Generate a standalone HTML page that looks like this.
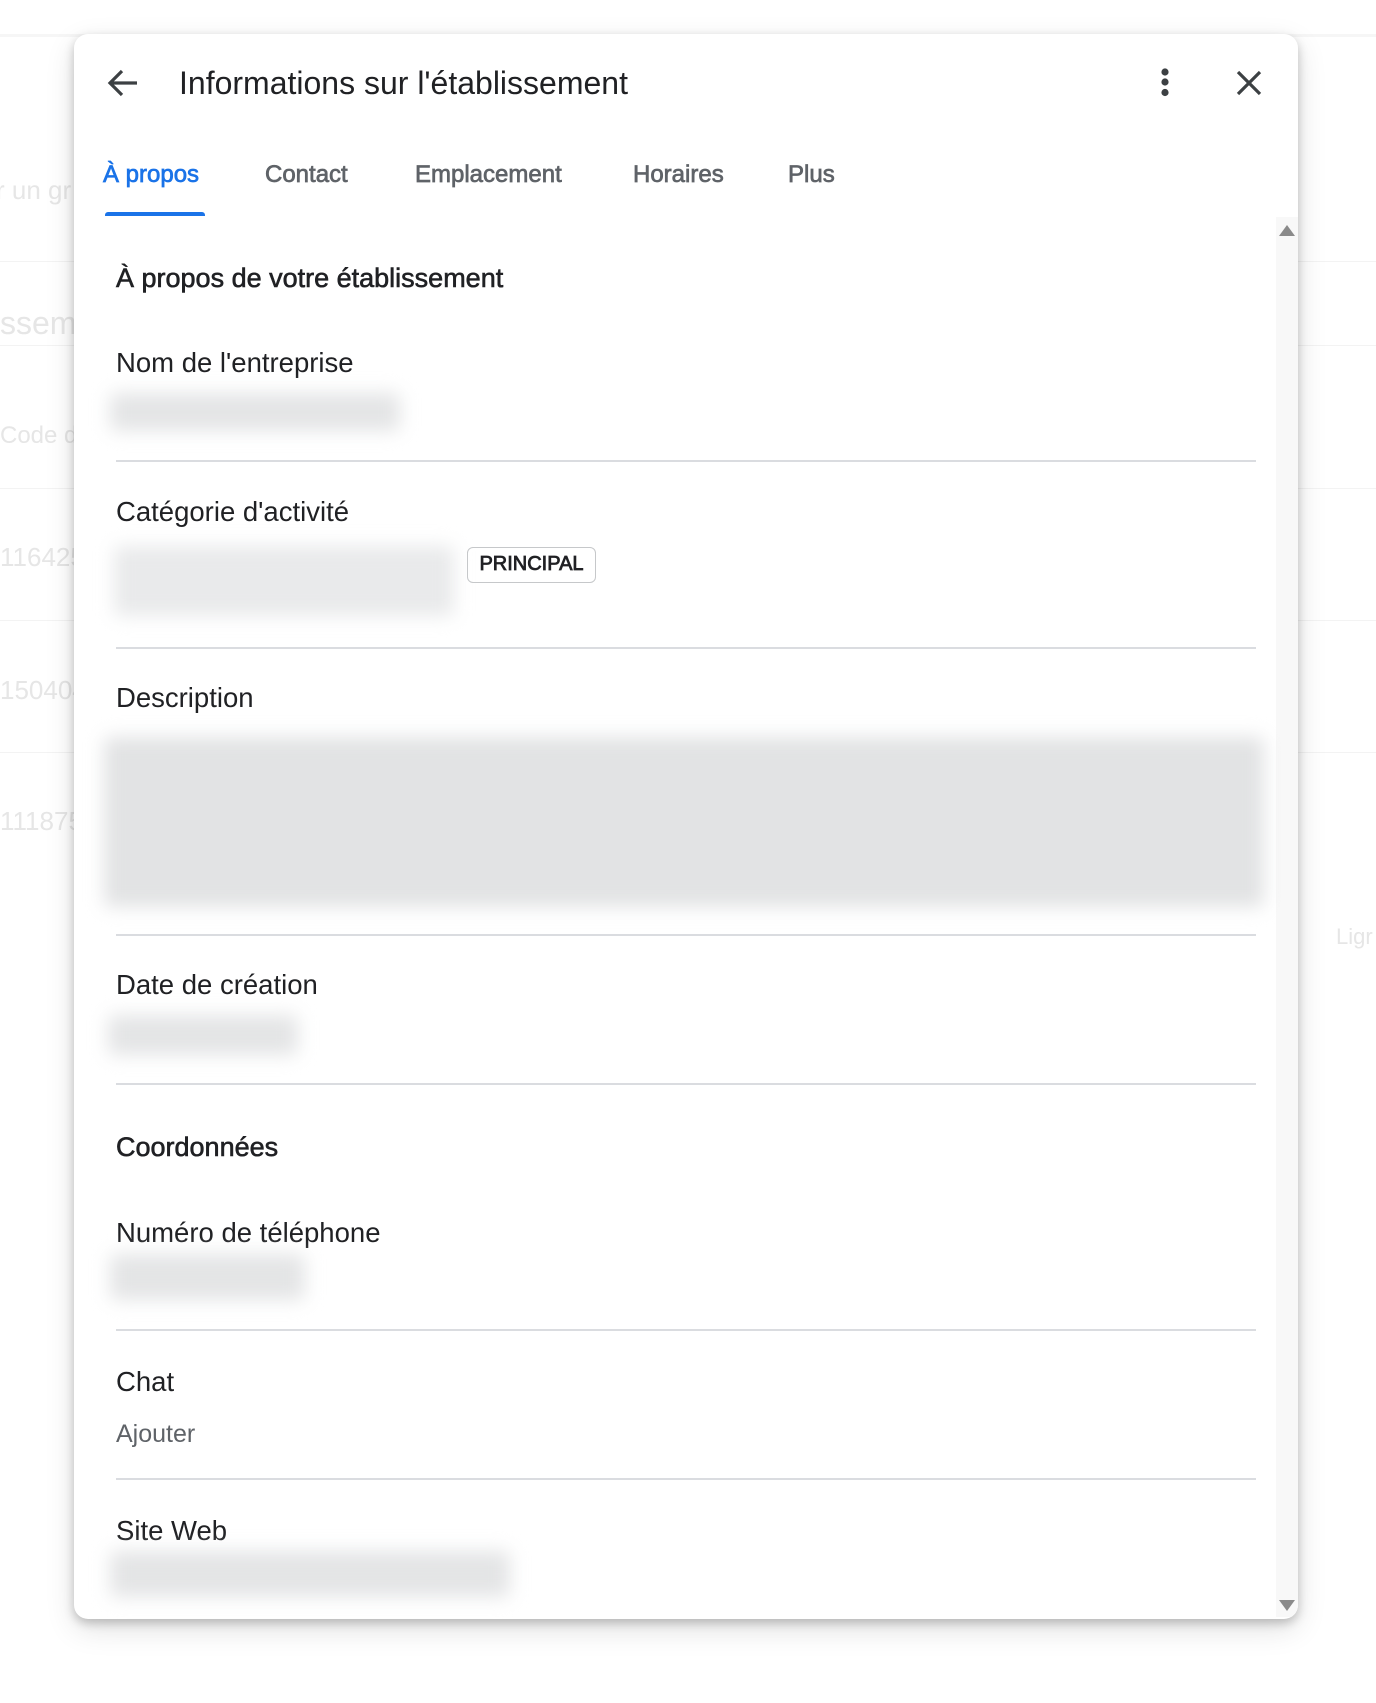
<!DOCTYPE html>
<html><head><meta charset="utf-8"><style>
*{margin:0;padding:0;box-sizing:border-box}
body{width:1376px;height:1703px;background:#fff;position:relative;overflow:hidden;font-family:"Liberation Sans",Arial,sans-serif;color:#3c4043}
.a{position:absolute;white-space:nowrap}
.bg{color:#e6e6e6;font-size:26px}
.hl{position:absolute;left:0;width:1376px;height:1px;background:#f3f3f3}
#dlg{position:absolute;left:74px;top:34px;width:1224px;height:1585px;background:#fff;border-radius:14px;box-shadow:0 4px 10px rgba(0,0,0,.22),0 10px 30px rgba(0,0,0,.12);overflow:hidden}
.lbl{font-size:27.5px;color:#202124}
.h{font-size:27px;color:#202124;-webkit-text-stroke:0.6px #202124}
.div{position:absolute;left:42px;width:1140px;height:2px;background:#dadce0}
.blur{position:absolute;background:#e4e5e6;filter:blur(9px);border-radius:6px}
.tab{font-size:24px;color:#5f6368;-webkit-text-stroke:0.7px #5f6368;top:127px}
</style></head><body>
<div class="hl" style="top:34px;height:3px;background:#f6f6f6"></div>
<div class="a bg" style="left:-4px;top:175px">r un gr</div>
<div class="a bg" style="left:0;top:305px;font-size:32px">ssem</div>
<div class="a bg" style="left:0;top:422px;font-size:24px">Code d</div>
<div class="a bg" style="left:0;top:542px">116425</div>
<div class="a bg" style="left:0;top:675px">150404</div>
<div class="a bg" style="left:0;top:806px">111875</div>
<div class="a bg" style="left:1336px;top:924px;font-size:22px">Ligr</div>
<div class="hl" style="top:261px"></div><div class="hl" style="top:345px"></div><div class="hl" style="top:488px"></div><div class="hl" style="top:620px"></div><div class="hl" style="top:752px"></div>

<div id="dlg">
<svg class="a" style="left:32px;top:34px" width="34" height="30" viewBox="0 0 34 30"><path d="M31 15H4M16 3L4 15l12 12" fill="none" stroke="#3c4043" stroke-width="3.2"/></svg>
<div class="a" style="left:105px;top:31px;font-size:32px;color:#202124">Informations sur l'établissement</div>
<svg class="a" style="left:1083px;top:34px" width="16" height="30"><circle cx="8" cy="4" r="3.6" fill="#3c4043"/><circle cx="8" cy="14" r="3.6" fill="#3c4043"/><circle cx="8" cy="24.5" r="3.6" fill="#3c4043"/></svg>
<svg class="a" style="left:1162px;top:36px" width="26" height="26"><path d="M2 2L24 24M24 2L2 24" stroke="#3c4043" stroke-width="3.2"/></svg>

<div class="a tab" style="left:29px;color:#1a73e8;-webkit-text-stroke:0.7px #1a73e8">À propos</div>
<div class="a tab" style="left:191px">Contact</div>
<div class="a tab" style="left:341px">Emplacement</div>
<div class="a tab" style="left:559px">Horaires</div>
<div class="a tab" style="left:714px">Plus</div>
<div class="a" style="left:31px;top:178px;width:100px;height:4px;background:#1a73e8;border-radius:3px 3px 0 0"></div>

<div class="a" style="left:1202px;top:183px;width:22px;height:1400px;background:#f8f8f8"></div>
<svg class="a" style="left:1204px;top:190px" width="18" height="14"><path d="M9 1L17 12H1Z" fill="#8a8a8a"/></svg>
<svg class="a" style="left:1204px;top:1564px" width="18" height="14"><path d="M9 13L17 2H1Z" fill="#8a8a8a"/></svg>

<div class="a h" style="left:42px;top:229px">À propos de votre établissement</div>
<div class="a lbl" style="left:42px;top:313px">Nom de l'entreprise</div>
<div class="blur" style="left:36px;top:359px;width:290px;height:38px"></div>
<div class="div" style="top:426px"></div>

<div class="a lbl" style="left:42px;top:462px">Catégorie d'activité</div>
<div class="blur" style="left:40px;top:512px;width:340px;height:70px;background:#e9eaeb"></div>
<div class="a" style="left:393px;top:513px;width:129px;height:36px;border:1.5px solid #c6c8ca;border-radius:6px;font-size:20px;color:#202124;-webkit-text-stroke:0.8px #202124;text-align:center;line-height:33px">PRINCIPAL</div>
<div class="div" style="top:613px"></div>

<div class="a lbl" style="left:42px;top:648px">Description</div>
<div class="blur" style="left:30px;top:703px;width:1160px;height:170px;background:#e2e3e4"></div>
<div class="div" style="top:900px"></div>

<div class="a lbl" style="left:42px;top:935px">Date de création</div>
<div class="blur" style="left:34px;top:981px;width:190px;height:40px"></div>
<div class="div" style="top:1049px"></div>

<div class="a h" style="left:42px;top:1098px">Coordonnées</div>
<div class="a lbl" style="left:42px;top:1183px">Numéro de téléphone</div>
<div class="blur" style="left:36px;top:1220px;width:195px;height:46px"></div>
<div class="div" style="top:1295px"></div>

<div class="a lbl" style="left:42px;top:1332px">Chat</div>
<div class="a" style="left:42px;top:1386px;font-size:25px;color:#5f6368">Ajouter</div>
<div class="div" style="top:1444px"></div>

<div class="a lbl" style="left:42px;top:1481px">Site Web</div>
<div class="blur" style="left:36px;top:1517px;width:400px;height:46px"></div>
</div>
</body></html>
